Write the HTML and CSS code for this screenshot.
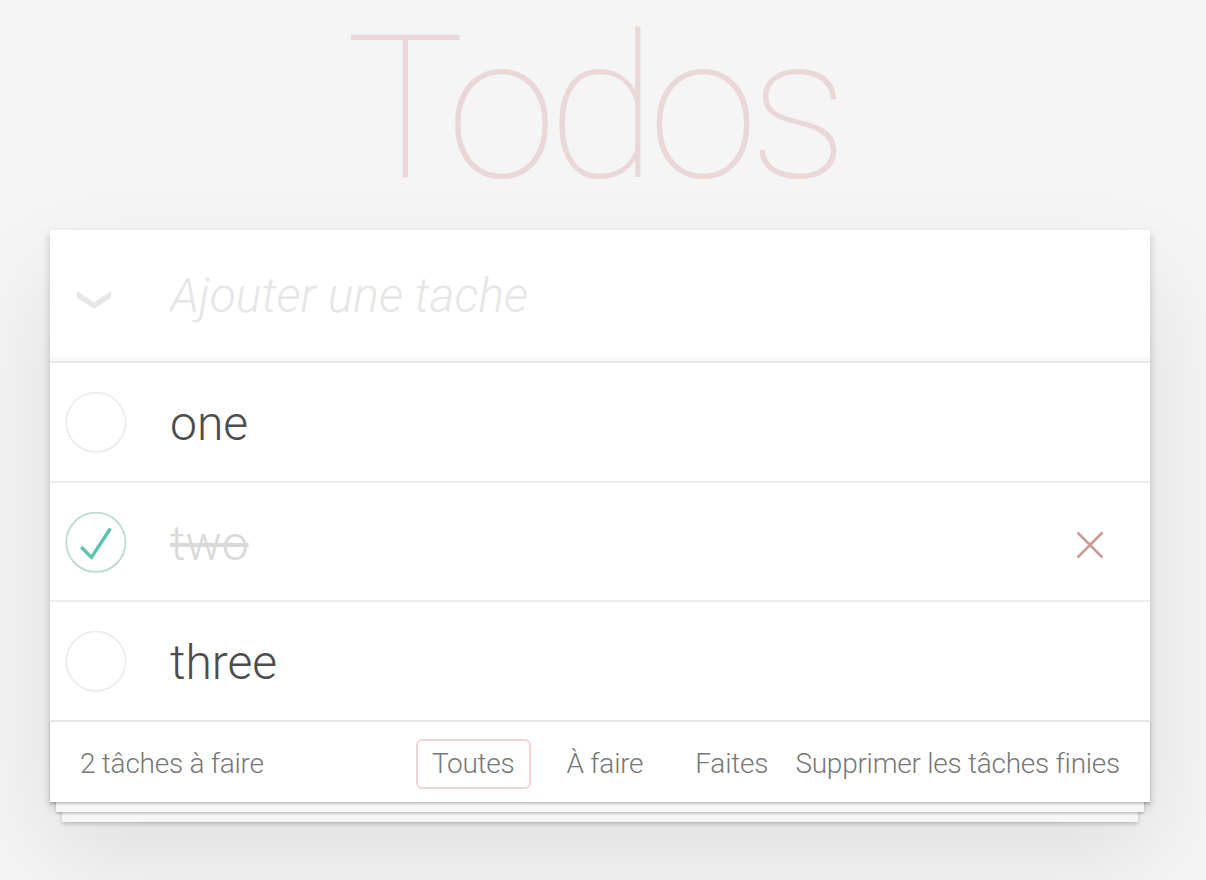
FILE: index.html
```html
<!DOCTYPE html>
<html lang="fr">
<head>
<meta charset="utf-8">
<title>Todos</title>
<link rel="stylesheet" href="styles.css">
</head>
<body>
<section class="app">
  <h1 class="title">Todos</h1>
  <section class="todoapp">
    <header class="header">
      <span class="toggle-all">
        <svg width="34" height="19" viewBox="0 0 34 19"><polygon points="0,0 17,11.5 34,0 34,6.5 17,18 0,6.5" fill="#e6e6e6"/></svg>
      </span>
      <input class="new-todo" type="text" placeholder="Ajouter une tache">
    </header>
    <ul class="todo-list">
      <li class="todo">
        <span class="toggle"><svg width="80" height="80" viewBox="-10 -18 100 135"><circle cx="50" cy="50" r="50" fill="none" stroke="#ededed" stroke-width="3"/></svg></span>
        <label class="todo-label">one</label>
      </li>
      <li class="todo completed">
        <span class="toggle"><svg width="80" height="80" viewBox="-10 -18 100 135"><circle cx="50" cy="50" r="50" fill="none" stroke="#bddad5" stroke-width="3"/><path fill="#5dc2af" d="M72 25L42 71 27 56l-4 4 20 20 34-52z"/></svg></span>
        <label class="todo-label">two</label>
        <button class="destroy" type="button" aria-label="Supprimer"><svg width="28" height="28" viewBox="0 0 28 28"><path d="M1.5 1.5L26.5 26.5M26.5 1.5L1.5 26.5" stroke="#cc9a9a" stroke-width="2.6" fill="none"/></svg></button>
      </li>
      <li class="todo">
        <span class="toggle"><svg width="80" height="80" viewBox="-10 -18 100 135"><circle cx="50" cy="50" r="50" fill="none" stroke="#ededed" stroke-width="3"/></svg></span>
        <label class="todo-label">three</label>
      </li>
    </ul>
    <footer class="footer">
      <span class="todo-count">2 tâches à faire</span>
      <ul class="filters">
        <li><a class="filter selected" href="#/">Toutes</a></li>
        <li><a class="filter" href="#/active">À faire</a></li>
        <li><a class="filter" href="#/completed">Faites</a></li>
      </ul>
      <button class="clear-completed" type="button">Supprimer les tâches finies</button>
    </footer>
  </section>
</section>
</body>
</html>
```

FILE: styles.css
```css
html, body {
  margin: 0;
  padding: 0;
}

body {
  background: #f5f5f5;
  color: #4d4d4d;
  font-family: "Roboto", "Helvetica Neue", "Liberation Sans", sans-serif;
  font-weight: 300;
  -webkit-font-smoothing: antialiased;
}

.app {
  width: 1100px;
  margin: 0 0 80px 50px;
}

.title {
  margin: 0 0 13px 0;
  padding-right: 15px;
  font-size: 200px;
  line-height: 217px;
  font-weight: 100;
  letter-spacing: -9px;
  text-align: center;
  color: rgba(175, 47, 47, 0.15);
}

.todoapp {
  background: #fff;
  box-shadow: 0 4px 8px 0 rgba(0, 0, 0, 0.2), 0 50px 100px 0 rgba(0, 0, 0, 0.1);
}

.header {
  display: flex;
  align-items: center;
  height: 131.2px;
  box-shadow: inset 0 -4px 2px rgba(0, 0, 0, 0.03);
}

.toggle-all {
  flex: none;
  width: 87px;
  display: flex;
  justify-content: center;
  padding-top: 9px;
}

.toggle-all svg {
  display: block;
}

.new-todo {
  flex: 1;
  min-width: 0;
  margin: 0;
  padding: 0 32px 0 33px;
  border: 0;
  outline: none;
  background: transparent;
  font-family: inherit;
  font-weight: 300;
  font-size: 48px;
  line-height: 67.2px;
  height: 67.2px;
  color: inherit;
}

.new-todo::placeholder {
  font-style: italic;
  font-weight: 300;
  color: #e6e6e6;
}

.todo-list {
  margin: 0;
  padding: 0;
  list-style: none;
  border-top: 2px solid #e6e6e6;
}

.todo {
  display: flex;
  align-items: center;
  height: 117.6px;
  border-bottom: 2px solid #ededed;
}

.todo:last-child {
  border-bottom: none;
}

.toggle {
  flex: none;
  width: 80px;
  height: 80px;
}

.toggle svg {
  display: block;
}

.todo-label {
  flex: 1;
  margin-left: 40px;
  font-size: 48px;
  line-height: 57.6px;
  padding-top: 4px;
  color: #4d4d4d;
  white-space: nowrap;
}

.completed .todo-label {
  color: #d9d9d9;
  text-decoration: line-through;
}

.destroy {
  flex: none;
  width: 80px;
  height: 80px;
  margin-right: 20px;
  padding: 6px 0 0 0;
  border: 0;
  background: none;
  display: flex;
  align-items: center;
  justify-content: center;
}

.destroy svg {
  display: block;
}

.footer {
  display: grid;
  grid-template-columns: 1fr auto 1fr;
  align-items: center;
  height: 40px;
  padding: 17px 30px 23px;
  border-top: 2px solid #e6e6e6;
  color: #777;
  font-size: 28px;
  letter-spacing: -0.25px;
  box-shadow: 0 2px 2px rgba(0, 0, 0, 0.2),
    0 16px 0 -6px #f6f6f6,
    0 18px 2px -6px rgba(0, 0, 0, 0.2),
    0 32px 0 -12px #f6f6f6,
    0 34px 4px -12px rgba(0, 0, 0, 0.2);
}

.todo-count {
  line-height: 40px;
  white-space: nowrap;
}

.filters {
  display: flex;
  gap: 20px;
  margin: 0;
  padding: 0;
  list-style: none;
}

.filter {
  display: block;
  padding: 6px 14px;
  border: 2px solid transparent;
  border-radius: 6px;
  line-height: 34px;
  color: inherit;
  text-decoration: none;
}

.filter.selected {
  border-color: rgba(175, 47, 47, 0.2);
}

.clear-completed {
  justify-self: end;
  margin: 0;
  padding: 0;
  border: 0;
  background: none;
  font-family: inherit;
  font-weight: 300;
  font-size: 28px;
  line-height: 40px;
  letter-spacing: -0.25px;
  color: inherit;
  white-space: nowrap;
}
```
